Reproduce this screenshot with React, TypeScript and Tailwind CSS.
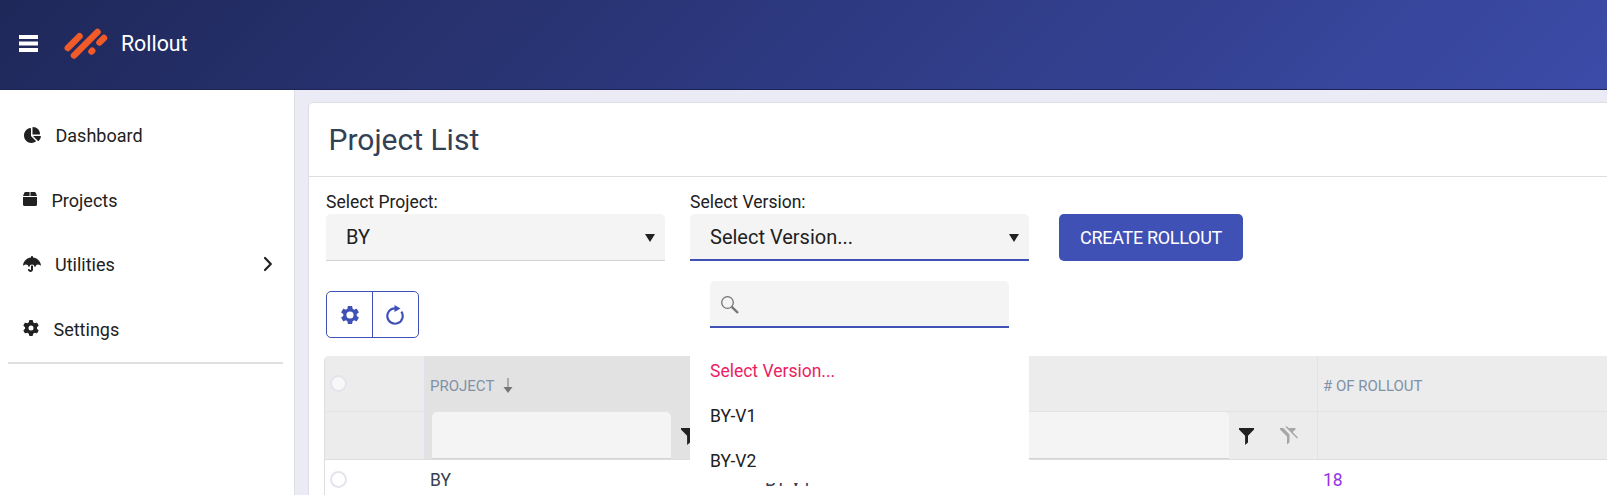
import React from "react";
import { FaChartPie, FaGear, FaUmbrella } from "react-icons/fa6";

const Caret = () => (
  <svg className="relative top-px h-2 w-2.5" viewBox="0 0 10 8"><path d="M0 0h10L5 8z" fill="#212121" /></svg>
);

const Funnel = () => (
  <svg className="relative top-px h-[17px] w-4 shrink-0" viewBox="0 0 16 17"><path d="M0 0h15v1.500L9 7.800v6.700L6.100 17V7.800L0 1.500z" fill="#212121" /></svg>
);

const FunnelClear = () => (
  <svg className="h-5 w-[18px] shrink-0" viewBox="0 0 18 20">
    <path d="M0 2h3.400l6.100 6.500v7.700L7 18.500V10.500L0 3.500zM8.600 2h6.900v1.500L12.300 6.300z" fill="#a6a6a6" />
    <path d="M6 .5L17.500 12" stroke="#a6a6a6" strokeWidth="1.400" />
  </svg>
);

const gear =
  "M19.430 12.980c.04-.32.07-.64.07-.98s-.03-.66-.07-.98l2.110-1.650c.19-.15.24-.42.12-.64l-2-3.460c-.12-.22-.39-.3-.61-.22l-2.490 1c-.52-.4-1.080-.73-1.690-.98l-.38-2.650C14.460 2.180 14.250 2 14 2h-4c-.25 0-.46.18-.49.42l-.38 2.650c-.61.25-1.170.59-1.690.98l-2.490-1c-.23-.09-.49 0-.61.22l-2 3.460c-.13.22-.07.49.12.64l2.110 1.650c-.04.32-.07.65-.07.98s.03.66.07.98l-2.110 1.650c-.19.15-.24.42-.12.64l2 3.460c.12.22.39.3.61.22l2.490-1c.52.4 1.080.73 1.690.98l.38 2.650c.03.24.24.42.49.42h4c.25 0 .46-.18.49-.42l.38-2.650c.61-.25 1.170-.59 1.690-.98l2.490 1c.23.09.49 0 .61-.22l2-3.460c.12-.22.07-.49-.12-.64zM12 16a4 4 0 1 1 0-8 4 4 0 0 1 0 8z";

const Gear = () => (
  <svg className="h-[18px] w-[18px]" viewBox="2 2 20 20"><path d={gear} fill="currentColor" /></svg>
);

const Box = () => (
  <svg className="h-[14px] w-[14px]" viewBox="0 0 14 14" fill="currentColor">
    <path d="M2.500 0H6.400v4H0L1.200.9Q1.600 0 2.500 0zM7.600 0h3.900q.9 0 1.300.9L14 4H7.600zM0 5h14v7.500q0 1.500-1.500 1.500h-11Q0 14 0 12.500z" />
    <path d="M6.400 0h1.200v4H6.400z" opacity=".5" />
  </svg>
);

const Item = ({ icon, gap, label, arrow }: { icon: React.ReactNode; gap: string; label: string; arrow?: boolean }) => (
  <div className="flex h-[64.600px] items-center pl-[23px] pr-[21px] text-[18px] text-[#212121]">
    <span className="relative -top-px">{icon}</span>
    <span className={gap}>{label}</span>
    {arrow && (
      <svg className="relative -top-[1px] ml-auto h-4 w-[10px]" viewBox="0 0 10 16" fill="none" stroke="#212121" strokeWidth="2.200" strokeLinecap="round" strokeLinejoin="round"><path d="M2 2l5.800 6L2 14" /></svg>
    )}
  </div>
);

const Radio = ({ className }: { className: string }) => (
  <span className={`block h-[17px] w-[17px] rounded-full border-2 border-[#e2e5ec] ${className}`} />
);

export default function App() {
  return (
    <div className="flex h-[495px] w-full flex-col overflow-hidden bg-[#ebebf5] font-[Roboto,sans-serif] text-[#212121]">
      <header className="flex h-[90px] shrink-0 items-center border-b border-[#1f2458] bg-[linear-gradient(135deg,#1f2859,#3c4ba8)] pb-px pl-[19px] text-white">
        <svg className="relative -top-[0.500px] h-[17px] w-[19px]" viewBox="0 0 19 17"><path d="M0 0h19v4H0zM0 6.500h19v4H0zM0 13h19v4H0z" fill="currentColor" /></svg>
        <svg className="ml-[26px] h-8 w-11" viewBox="0 0 44 32" stroke="#f15a29" strokeWidth="6.500" strokeLinecap="round">
          <path d="M3.800 20L15.500 8.300M10 27.500L33.500 4M35.500 14.500L40 10M27.500 23.500l.7-.7" />
        </svg>
        <span className="ml-[13px] text-[21.300px] leading-none">Rollout</span>
      </header>
      <div className="flex min-h-0 flex-1">
        <aside className="w-[295px] shrink-0 border-r border-[#dedee2] bg-white pt-[13.400px]">
          <Item icon={<FaChartPie size={18} />} gap="ml-[14.500px]" label="Dashboard" />
          <Item icon={<Box />} gap="ml-[14.500px]" label="Projects" />
          <Item icon={<FaUmbrella size={18} />} gap="ml-[14px]" label="Utilities" arrow />
          <Item icon={<FaGear size={16} />} gap="ml-[14.500px]" label="Settings" />
          <div className="ml-2 h-[2px] w-[275px] bg-[#e0e0e0]" />
        </aside>
        <main className="min-w-0 flex-1 pl-[13px] pt-3">
          <section className="h-[400px] rounded-tl-[5px] border-l border-t border-[#dedee2] bg-white">
            <div className="flex h-[74px] items-center border-b border-[#dedede] pl-[19.500px]">
              <h1 className="text-[30px] leading-9 text-[#334155]">Project List</h1>
            </div>
            <div className="flex pl-[17px] pt-[13px]">
              <div className="w-[339px]">
                <label className="block h-6 text-[17.500px] leading-6">Select Project:</label>
                <div className="flex h-[47px] items-center justify-between rounded-t-[5px] border-b border-[#d3d3d3] bg-[#f4f4f4] pl-5 pr-[10px] text-[20px]">BY<Caret /></div>
              </div>
              <div className="relative ml-[25px] w-[339px]">
                <label className="block h-6 text-[17.500px] leading-6">Select Version:</label>
                <div className="flex h-[47px] items-center justify-between rounded-t-[5px] border-b-2 border-[#3f51b5] bg-[#f4f4f4] pl-5 pr-[10px] text-[20px]">Select Version...<Caret /></div>
                <div className="absolute left-0 top-full z-10 h-[222px] w-[339px] bg-white px-5 pt-5">
                  <div className="flex h-[47px] items-center rounded-t-[5px] border-b-2 border-[#3f51b5] bg-[#f4f4f4] pl-[11px] pt-[2px]">
                    <svg className="h-[18px] w-[18px]" viewBox="0 0 18 18" fill="none" stroke="#757575"><circle cx="6.500" cy="6.500" r="5.800" strokeWidth="1.300" /><path d="M10.800 10.800L17 17" strokeWidth="2.400" /></svg>
                  </div>
                  <ul className="pt-[21px] text-[17.500px] leading-[45px]">
                    <li className="text-[#e91e63]">Select Version...</li>
                    <li>BY-V1</li>
                    <li>BY-V2</li>
                  </ul>
                </div>
              </div>
              <button className="ml-[30px] mt-6 h-[47px] w-[184px] rounded-[5px] bg-[#3f51b5] text-[18px] tracking-[-0.300px] text-white">CREATE ROLLOUT</button>
            </div>
            <div className="ml-[17px] mt-[30px] flex h-[47px] w-[93px] rounded-[5px] border border-[#3f51b5] text-[#3f51b5]">
              <span className="flex w-[46px] items-center justify-center border-r border-[#3f51b5]"><Gear /></span>
              <span className="flex flex-1 items-center justify-center pr-px">
                <svg className="h-5 w-[18px]" viewBox="0 0 18 20" fill="none"><path d="M10 3.300H9a7.700 7.700 0 1 0 6.400 3.400" stroke="currentColor" strokeWidth="2.200" /><path d="M8.500 0L14.500 3.500 8.500 7z" fill="currentColor" /></svg>
              </span>
            </div>
            <div className="ml-[15px] mt-[18px] overflow-hidden rounded-tl-[5px] border-l border-[#dedede]">
              <div className="grid grid-cols-[100px_335px_558px_1fr] border-b border-[#dedede] bg-[#ececec] text-[15px] text-[#8091a7]">
                <div className="border-r border-[#e2e3ea]">
                  <div className="h-14 border-b border-[#e2e3e6] pl-[5px] pt-[19px]"><Radio className="bg-[#f8f8f8]" /></div>
                </div>
                <div className="bg-[#e2e2e2]">
                  <div className="flex h-14 items-center border-b border-[#e4e4e5] pl-[5px] pt-[5px]">PROJECT
                    <svg className="relative -top-px ml-[9px] h-[15px] w-[10px]" viewBox="0 0 10 15"><path d="M5 0v12" stroke="#757575" /><path d="M.5 9h9L5 15z" fill="#757575" /></svg>
                  </div>
                  <div className="flex h-[47px] items-center pl-[7px]">
                    <div className="h-[47px] w-[239px] rounded-t-[5px] border-b border-[#d3d3d3] bg-[#f4f4f4]" />
                    <span className="ml-[10px]"><Funnel /></span>
                  </div>
                </div>
                <div className="border-r border-[#e2e3ea]">
                  <div className="h-14 border-b border-[#e2e3e6]" />
                  <div className="flex h-[47px] items-center pl-[7px]">
                    <div className="h-[47px] w-[462px] rounded-t-[5px] border-b border-[#d3d3d3] bg-[#f4f4f4]" />
                    <span className="ml-[10px]"><Funnel /></span>
                    <span className="ml-[25px]"><FunnelClear /></span>
                  </div>
                </div>
                <div>
                  <div className="flex h-14 items-center border-b border-[#e2e3e6] pl-[5px] pt-[5px]"># OF ROLLOUT</div>
                </div>
              </div>
              <div className="grid h-10 grid-cols-[100px_335px_558px_1fr] text-[17.500px] leading-10 text-[#374151]">
                <div className="pl-[5px] pt-[11px]"><Radio className="bg-white" /></div>
                <div className="pl-[5px]">BY</div>
                <div className="pl-[5px]">BY-V1</div>
                <div className="pl-[5px] text-[#9333ea]">18</div>
              </div>
            </div>
          </section>
        </main>
      </div>
    </div>
  );
}
